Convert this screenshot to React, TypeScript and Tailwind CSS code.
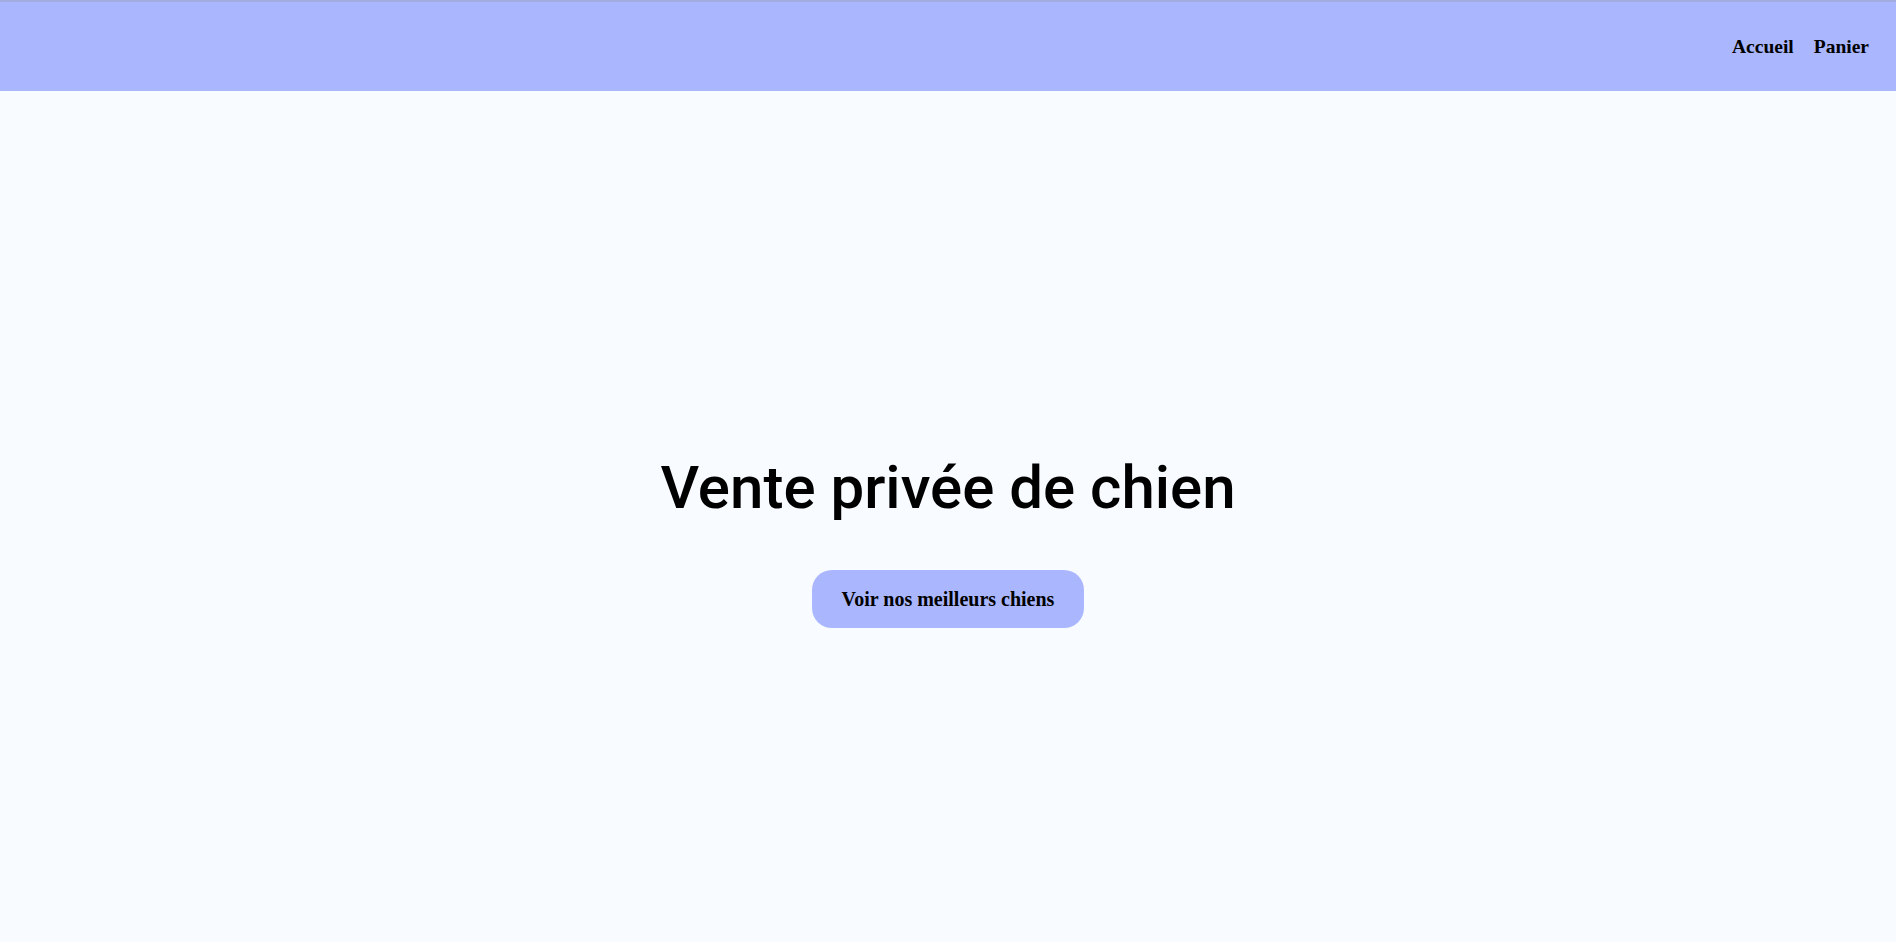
import React from 'react';

const serif = { fontFamily: '"Liberation Serif", "Times New Roman", serif' };

export default function App() {
  return (
    <div className="min-h-screen bg-[#f8fbff] flex flex-col">
      <header className="h-[91px] bg-[#aab7ff] border-t-2 border-[#a3acdf] flex items-center justify-end pr-[27px]">
        <nav className="flex items-center gap-[20px] text-[19.5px] font-bold text-black" style={serif}>
          <a href="#">Accueil</a>
          <a href="#">Panier</a>
        </nav>
      </header>
      <main className="flex-1 flex flex-col items-center justify-center pt-[53px]">
        <h1
          className="text-[60px] font-medium text-black leading-none"
          style={{ fontFamily: 'Roboto, "Noto Sans", sans-serif' }}
        >
          Vente privée de chien
        </h1>
        <button
          className="mt-[52px] h-[58px] px-[30px] rounded-[20px] bg-[#aab7ff] text-black font-bold text-[20px]"
          style={serif}
        >
          Voir nos meilleurs chiens
        </button>
      </main>
    </div>
  );
}
